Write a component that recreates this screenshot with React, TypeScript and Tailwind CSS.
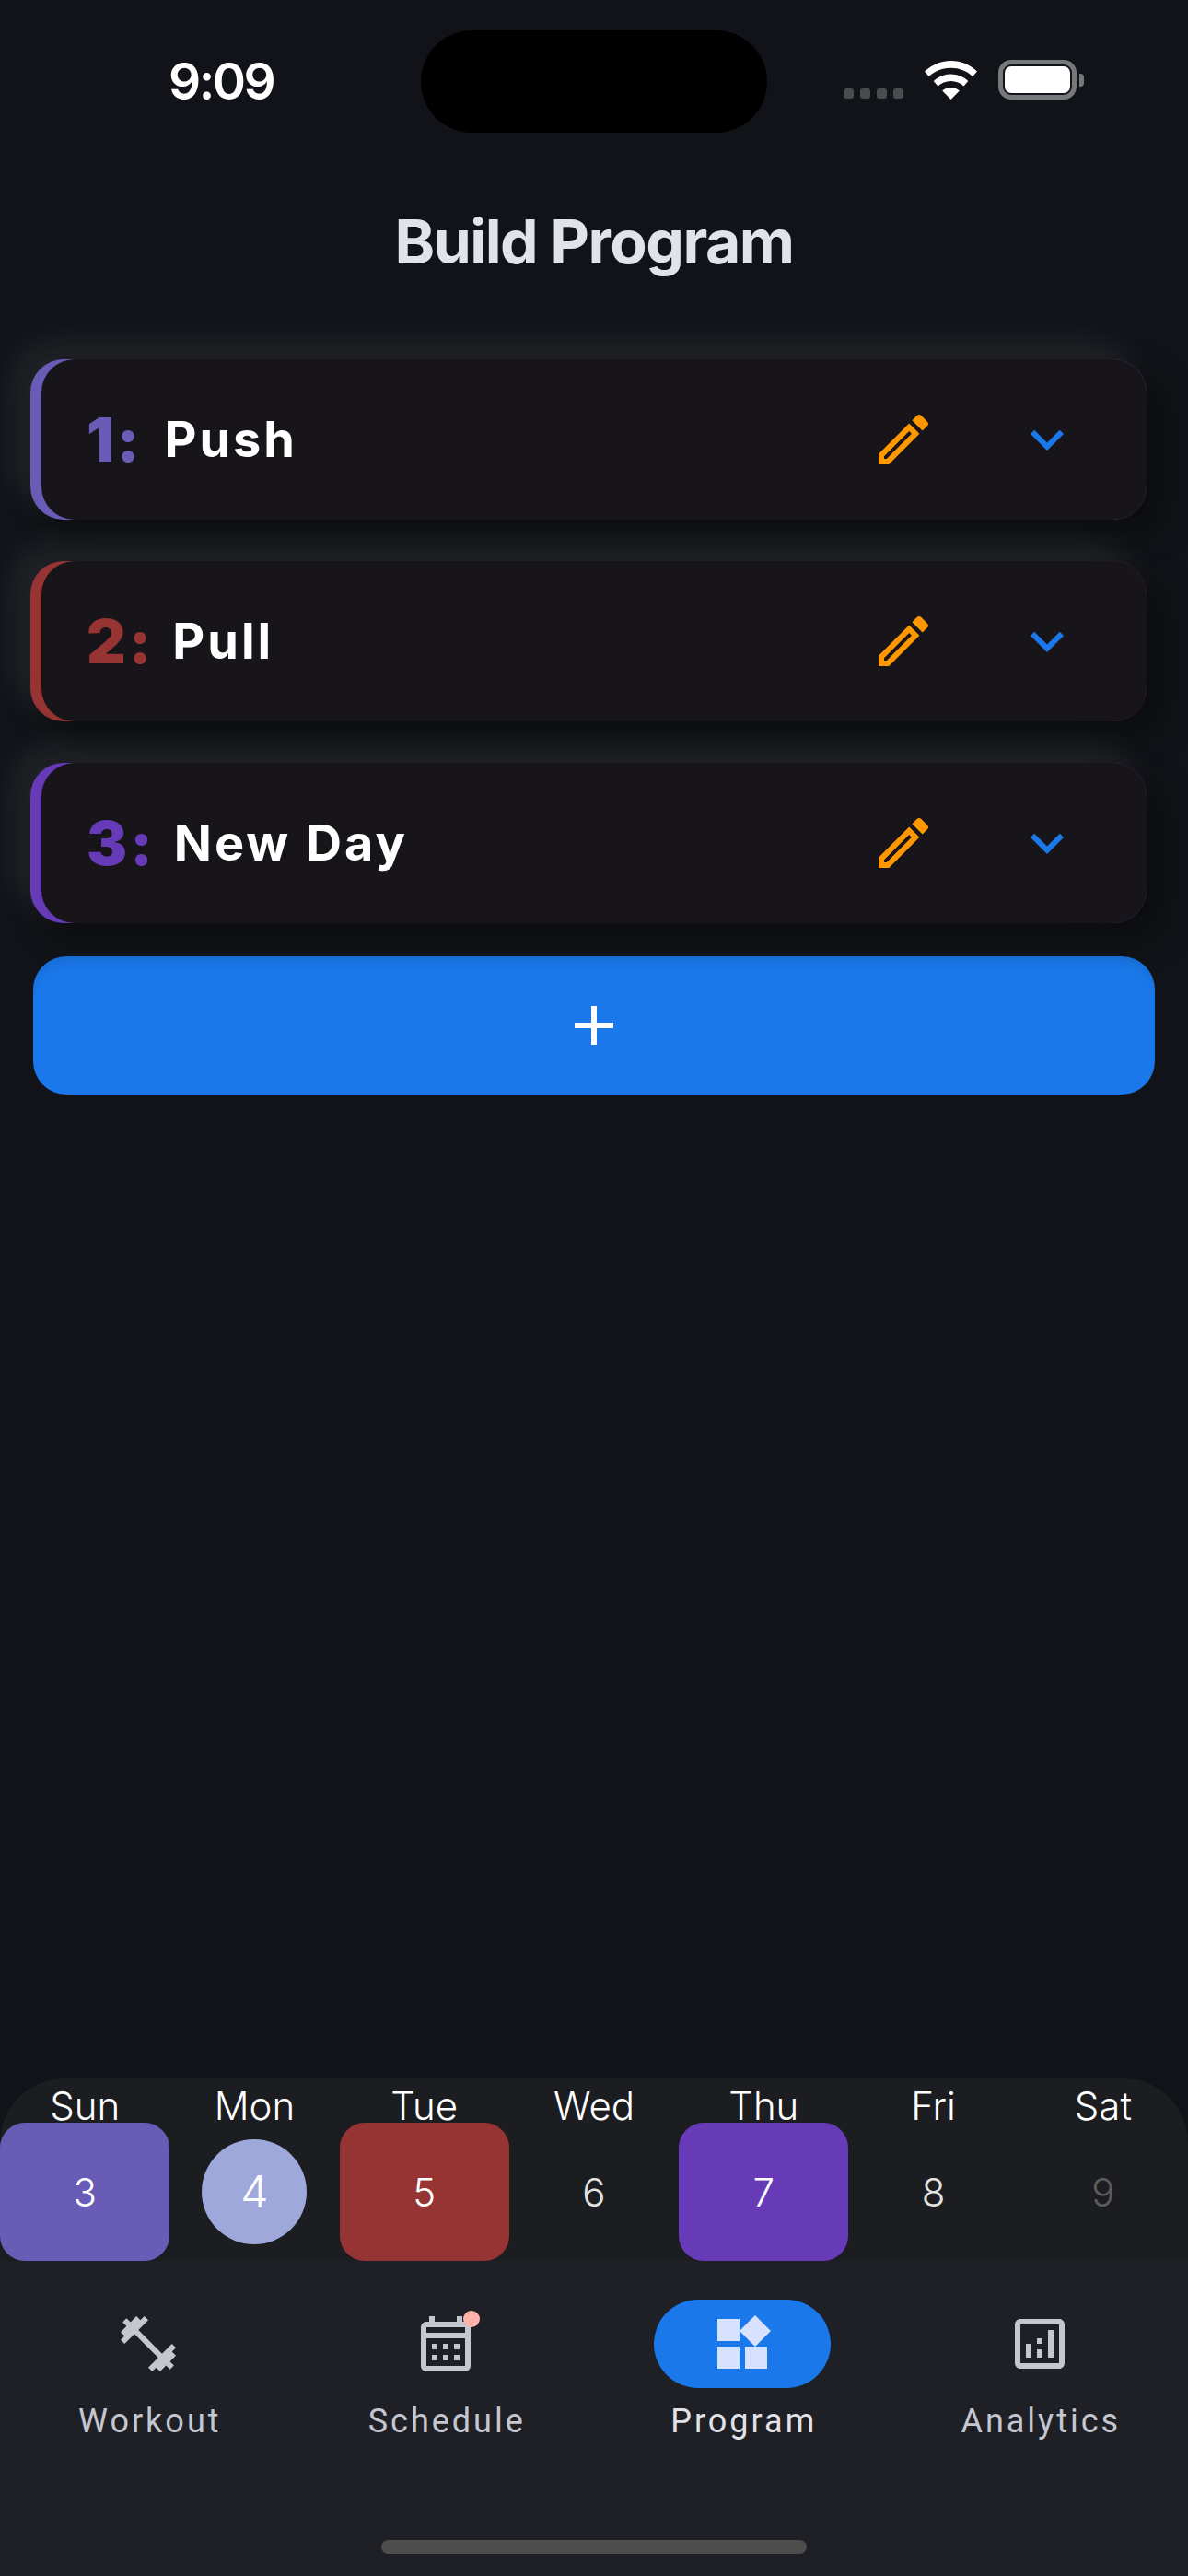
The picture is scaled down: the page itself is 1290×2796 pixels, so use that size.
const days = [
  { name: "Sun", num: "3", color: "bg-[#685cb6]" },
  { name: "Mon", num: "4", today: true },
  { name: "Tue", num: "5", color: "bg-[#963333]" },
  { name: "Wed", num: "6" },
  { name: "Thu", num: "7", color: "bg-[#673ab7]" },
  { name: "Fri", num: "8" },
  { name: "Sat", num: "9", muted: true },
];

const programDays = [
  { num: "1:", name: "Push", bg: "bg-[#685cb6]", text: "text-[#685cb6]", gap: "ml-[24px]" },
  { num: "2:", name: "Pull", bg: "bg-[#963333]", text: "text-[#963333]", gap: "ml-[20px]" },
  { num: "3:", name: "New Day", bg: "bg-[#673ab7]", text: "text-[#673ab7]", gap: "ml-[20px]" },
];

const tabs = [
  {
    label: "Workout",
    path: "M20.57 14.86L22 13.43 20.57 12 17 15.57 8.43 7 12 3.43 10.57 2 9.14 3.43 7.71 2 5.57 4.14 4.14 2.71 2.71 4.14l1.43 1.43L2 7.71l1.43 1.43L2 10.57 3.43 12 7 8.43 15.57 17 12 20.57 13.43 22l1.43-1.43L16.29 22l2.14-2.14 1.43 1.43 1.43-1.43-1.43-1.43L22 16.29z",
  },
  {
    label: "Schedule",
    badge: true,
    path: "M19 4h-1V2h-2v2H8V2H6v2H5c-1.1 0-2 .9-2 2v14c0 1.1.9 2 2 2h14c1.1 0 2-.9 2-2V6c0-1.1-.9-2-2-2zm0 16H5V10h14v10zm0-12H5V6h14v2zM9 14H7v-2h2v2zm4 0h-2v-2h2v2zm4 0h-2v-2h2v2zm-8 4H7v-2h2v2zm4 0h-2v-2h2v2zm4 0h-2v-2h2v2z",
  },
  {
    label: "Program",
    active: true,
    path: "M13 13v8h8v-8h-8zM3 21h8v-8H3v8zM3 3v8h8V3H3zm13.66-1.31L11 7.34 16.66 13l5.66-5.66-5.66-5.65z",
  },
  {
    label: "Analytics",
    path: "M19 3H5c-1.1 0-2 .9-2 2v14c0 1.1.9 2 2 2h14c1.1 0 2-.9 2-2V5c0-1.1-.9-2-2-2zm0 16H5V5h14v14zM9 17H7v-5h2v5zm8 0h-2V7h2v10zm-4 0h-2v-3h2v3zm0-5h-2v-2h2v2z",
  },
];

function Icon({ path, className }: { path: string; className: string }) {
  return (
    <svg viewBox="0 0 24 24" className={className} fill="currentColor">
      <path d={path} />
    </svg>
  );
}

function StatusBar() {
  return (
    <div className="relative flex h-[144px] shrink-0 items-start justify-between">
      <span className="ml-[183px] mt-[55px] text-[55px] leading-[66px] font-semibold tracking-[-2.5px] text-white">
        9:09
      </span>
      <div className="absolute left-[457px] top-[33px] h-[111px] w-[376px] rounded-[56px] bg-black" />
      <div className="mr-[113px] mt-[65px] flex items-end">
        <div className="mb-px flex gap-[7px]">
          {[0, 1, 2, 3].map((i) => (
            <div key={i} className="h-[11px] w-[11px] rounded-[3px] bg-[#4a4b4e]" />
          ))}
        </div>
        <svg viewBox="0 0 57 42" className="ml-[23px] h-[42px] w-[57px]" fill="#fff">
          <path d="M28.500 0C39.500 0 49.800 4.400 57 11.500l-4.800 5.500C46 11.200 37.700 7.800 28.500 7.800S11 11.200 4.800 17L0 11.500C7.200 4.400 17.500 0 28.500 0z" />
          <path d="M28.500 14.500c7.200 0 13.900 2.800 18.800 7.500l-4.800 5.500c-3.600-3.400-8.500-5.500-14-5.500s-10.400 2.100-14 5.500l-4.800-5.500c4.900-4.700 11.600-7.500 18.800-7.500z" />
          <path d="M28.500 29c3.600 0 6.900 1.300 9.300 3.500L28.500 42l-9.300-9.500c2.400-2.200 5.700-3.500 9.300-3.500z" />
        </svg>
        <div className="ml-[23px] flex items-center">
          <div className="h-[43px] w-[85px] rounded-[14px] border-[5px] border-[#77787b] p-[2px]">
            <div className="h-full w-full rounded-[7px] bg-white" />
          </div>
          <div className="ml-[3px] h-[14px] w-[5px] rounded-r-[4px] bg-[#77787b]" />
        </div>
      </div>
    </div>
  );
}

function ProgramCard({ day }: { day: (typeof programDays)[number] }) {
  return (
    <div
      className={`ml-[33px] mr-[45px] h-[174px] rounded-[36px] pl-[12px] shadow-[18px_18px_36px_rgba(0,0,0,0.34),-18px_-18px_36px_rgba(255,255,255,0.08)] ${day.bg}`}
    >
      <div className="flex h-full items-center rounded-[36px] bg-[#171519] pl-[49px] pr-[72px]">
        <span className={`text-[66px] leading-none font-black tracking-[3px] ${day.text}`}>
          {day.num}
        </span>
        <span className={`${day.gap} text-[54px] leading-none font-bold tracking-[3px] text-white`}>
          {day.name}
        </span>
        <Icon
          className="ml-auto h-[72px] w-[72px] text-[#ff9800]"
          path="M3 17.25V21h3.750L17.810 9.940l-3.750-3.750L3 17.250zM5.920 19H5v-.92l9.060-9.060.92.92L5.920 19zM20.710 5.630l-2.340-2.340c-.2-.2-.45-.29-.71-.29s-.51.1-.7.29l-1.830 1.830 3.750 3.750 1.830-1.830c.39-.39.39-1.020 0-1.410z"
        />
        <Icon
          className="ml-[84px] h-[72px] w-[72px] text-[#1a78ea]"
          path="M16.590 8.590L12 13.170 7.410 8.590 6 10l6 6 6-6z"
        />
      </div>
    </div>
  );
}

export default function App() {
  return (
    <div className="flex h-[2796px] w-[1290px] flex-col bg-[#111318] font-['Inter',sans-serif]">
      <StatusBar />
      <h1 className="mt-[79px] text-center text-[66px] leading-[78px] font-bold tracking-[-1.5px] text-[#e2e2e9]">
        Build Program
      </h1>
      <div className="mt-[89px] flex flex-col gap-[45px]">
        {programDays.map((day) => (
          <ProgramCard key={day.name} day={day} />
        ))}
      </div>
      <button className="relative mx-[36px] mt-[36px] flex h-[150px] shrink-0 items-center justify-center rounded-[36px] bg-[#1a78ea] text-white shadow-[inset_0_12px_16px_-10px_rgba(0,0,0,0.16)]">
        <Icon className="h-[72px] w-[72px]" path="M19 13h-6v6h-2v-6H5v-2h6V5h2v6h6v2z" />
      </button>

      <div className="mt-auto grid h-[198px] shrink-0 grid-cols-7 rounded-t-[70px] bg-[#1c1d21]">
        {days.map((d) => (
          <div key={d.name} className="flex flex-col items-center">
            <span className="mt-[5px] h-[43px] text-[42px] leading-[50px] font-light text-white">
              {d.name}
            </span>
            <div
              className={`flex h-[150px] w-full items-center justify-center rounded-[27px] ${d.color ?? ""}`}
            >
              {d.today ? (
                <span className="flex h-[114px] w-[114px] items-center justify-center rounded-full bg-[#9fa8da] text-[48px] font-light text-white">
                  {d.num}
                </span>
              ) : (
                <span
                  className={`text-[42px] font-light ${d.muted ? "text-[#5c5c5c]" : d.color ? "text-white" : "text-[#e3e3e3]"}`}
                >
                  {d.num}
                </span>
              )}
            </div>
          </div>
        ))}
      </div>

      <div className="relative grid h-[342px] shrink-0 grid-cols-4 bg-[#1f2025] font-['Roboto',sans-serif]">
        {tabs.map((t) => (
          <div key={t.label} className="flex flex-col items-center pt-[42px]">
            <div
              className={`relative flex h-[96px] w-[192px] items-center justify-center rounded-[48px] ${t.active ? "bg-[#1a78ea] text-[#d8e2ff]" : "text-[#c4c6d0]"}`}
            >
              <Icon path={t.path} className="h-[72px] w-[72px]" />
              {t.badge && (
                <div className="absolute left-[115px] top-[12px] h-[18px] w-[18px] rounded-full bg-[#ffb4ab]" />
              )}
            </div>
            <span
              className={`mt-[12px] pl-[3px] text-[36px] leading-[48px] font-normal tracking-[3px] ${t.active ? "text-[#e2e2e9]" : "text-[#c4c6d0]"}`}
            >
              {t.label}
            </span>
          </div>
        ))}
        <div className="absolute bottom-[24px] left-[414px] h-[15px] w-[462px] rounded-full bg-[#4d4d4d]" />
      </div>
    </div>
  );
}
